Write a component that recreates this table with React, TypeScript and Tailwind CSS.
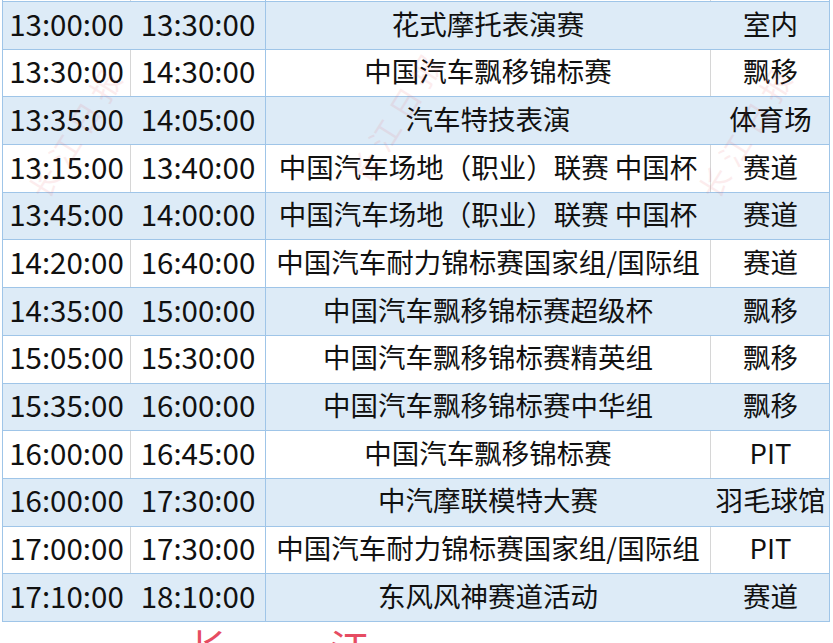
import React from 'react';

const rows: [string, string, string, string][] = [
  ['13:00:00', '13:30:00', '花式摩托表演赛', '室内'],
  ['13:30:00', '14:30:00', '中国汽车飘移锦标赛', '飘移'],
  ['13:35:00', '14:05:00', '汽车特技表演', '体育场'],
  ['13:15:00', '13:40:00', '中国汽车场地（职业）联赛 中国杯', '赛道'],
  ['13:45:00', '14:00:00', '中国汽车场地（职业）联赛 中国杯', '赛道'],
  ['14:20:00', '16:40:00', '中国汽车耐力锦标赛国家组/国际组', '赛道'],
  ['14:35:00', '15:00:00', '中国汽车飘移锦标赛超级杯', '飘移'],
  ['15:05:00', '15:30:00', '中国汽车飘移锦标赛精英组', '飘移'],
  ['15:35:00', '16:00:00', '中国汽车飘移锦标赛中华组', '飘移'],
  ['16:00:00', '16:45:00', '中国汽车飘移锦标赛', 'PIT'],
  ['16:00:00', '17:30:00', '中汽摩联模特大赛', '羽毛球馆'],
  ['17:00:00', '17:30:00', '中国汽车耐力锦标赛国家组/国际组', 'PIT'],
  ['17:10:00', '18:10:00', '东风风神赛道活动', '赛道'],
];

function Row({ r, blue }: { r: [string, string, string, string]; blue: boolean }) {
  const bg = blue ? 'bg-[#ddebf7]' : 'bg-white';
  const inner = blue ? 'border-[#ddebf7]' : 'border-[#d6d6d6]';
  return (
    <div className={`grid grid-cols-[128px_135px_445px_119px] h-[47.7px] border-b-[1.5px] border-[#9fc5e8] ${bg}`}>
      <div className={`flex items-center justify-center pb-1 border-r ${inner} text-[29.5px]`}>{r[0]}</div>
      <div className="flex items-center justify-center pb-1 border-r-[1.5px] border-[#9fc5e8] text-[29.5px]">{r[1]}</div>
      <div className={`flex items-center justify-center pb-1 border-r ${inner} whitespace-nowrap`}>{r[2]}</div>
      <div className="flex items-center justify-center pb-1 whitespace-nowrap">{r[3]}</div>
    </div>
  );
}

const mark = 'pointer-events-none absolute -rotate-[58deg] text-[30px] text-[#e8505a] opacity-[0.1] tracking-[8px] whitespace-nowrap';

export default function App() {
  return (
    <div
      className="relative w-[833px] h-[643px] overflow-hidden bg-white text-[27.5px] leading-none text-[#111]"
      style={{ fontFamily: '"Noto Sans CJK SC", "Noto Sans", sans-serif' }}
    >
      <div className="ml-[2px] w-[828px] border-l-[1.5px] border-r-[1.5px] border-[#9fc5e8]">
        {/* sliver of the row above */}
        <div className="grid grid-cols-[128px_135px_445px_119px] h-[1px] bg-white">
          <div className="border-r border-[#d6d6d6]" />
          <div className="border-r-[1.5px] border-[#9fc5e8]" />
          <div className="border-r border-[#d6d6d6]" />
          <div />
        </div>
        <div className="border-t-[1.5px] border-[#9fc5e8]">
          {rows.map((r, i) => (
            <Row key={i} r={r} blue={i % 2 === 0} />
          ))}
        </div>
      </div>

      {/* watermarks */}
      <div className={`${mark} left-[0px] top-[115px]`}>长江日报</div>
      <div className={`${mark} left-[320px] top-[100px]`}>长江日报</div>
      <div className={`${mark} left-[670px] top-[115px]`}>长江日报</div>
      <div className="pointer-events-none absolute left-[188px] top-[627px] text-[40px] leading-none text-[#e0203c] opacity-80">长</div>
      <div className="pointer-events-none absolute left-[330px] top-[627px] text-[40px] leading-none text-[#e0203c] opacity-80">江</div>
    </div>
  );
}
